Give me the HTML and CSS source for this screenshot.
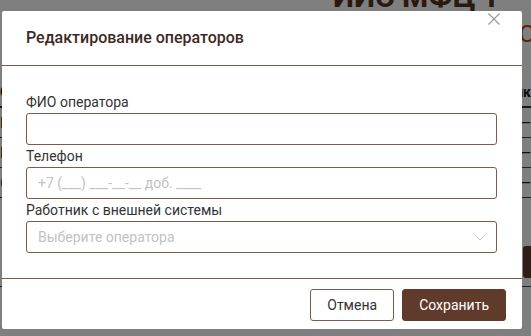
FILE: index.html
```html
<!DOCTYPE html>
<html lang="ru">
<head>
    <meta charset="UTF-8">
    <meta name="viewport" content="width=device-width, initial-scale=1.0">
    <title>Редактирование операторов</title>
    <link rel="stylesheet" href="styles.css">
</head>
<body>
    <div class="page">
        <div class="page-header">
            <h1>ИИС МФЦ Т</h1>
            <div class="page-sub">С</div>
        </div>
        <div class="page-table">
            <div class="row head"><span>Оператор</span><span>Ник</span></div>
            <div class="row"><span>Иванов</span><span>—</span></div>
            <div class="row"><span>Петров</span><span>—</span></div>
            <div class="row"><span class="link">Сидоров</span><span>—</span></div>
        </div>
        <div class="page-actions">
            <button class="page-btn"></button>
        </div>
    </div>

    <div class="overlay">
        <div class="modal">
            <div class="modal-header">
                <h2>Редактирование операторов</h2>
                <button class="close" aria-label="Закрыть">
                    <svg width="12" height="12" viewBox="0 0 12 12">
                        <path d="M0.5 0.5 L11.5 11.5 M11.5 0.5 L0.5 11.5" stroke="#9a9a9a" stroke-width="1.2" fill="none"/>
                    </svg>
                </button>
            </div>

            <div class="modal-body">
                <label class="field-label">ФИО оператора</label>
                <input class="field" type="text">

                <label class="field-label">Телефон</label>
                <input class="field" type="text" placeholder="+7 (___) ___-__-__ доб. ____">

                <label class="field-label">Работник с внешней системы</label>
                <div class="field select">
                    <span class="placeholder">Выберите оператора</span>
                    <svg width="12" height="7" viewBox="0 0 12 7">
                        <path d="M0.5 0.5 L6 6 L11.5 0.5" stroke="#c4c4c4" stroke-width="1" fill="none"/>
                    </svg>
                </div>
            </div>

            <div class="modal-footer">
                <button class="btn btn-cancel">Отмена</button>
                <button class="btn btn-save">Сохранить</button>
            </div>
        </div>
    </div>
</body>
</html>
```

FILE: styles.css
```css
* {
    margin: 0;
    padding: 0;
    box-sizing: border-box;
    font-family: Roboto, 'Liberation Sans', sans-serif;
}

body {
    background-color: #fff;
    height: 100vh;
    overflow: hidden;
}

/* page behind the dialog */
.page-header {
    display: flex;
    flex-direction: column;
    align-items: flex-start;
    padding-left: 333px;
    margin-top: -16px;
}

.page-header h1 {
    font-size: 30px;
    font-weight: 700;
    color: #55321f;
    white-space: nowrap;
    line-height: 26px;
}

.page-sub {
    margin-top: 10px;
    padding-left: 186px;
    font-size: 24px;
    color: #b4402c;
    white-space: nowrap;
}

.page-table {
    margin-top: 30px;
}

.row {
    display: flex;
    justify-content: space-between;
    height: 30px;
    align-items: center;
    border-bottom: 1px solid #444;
    font-size: 14px;
    color: #222;
}

.row.head {
    font-weight: 700;
    border-bottom: 2px solid #333;
}

.link {
    color: #1f5fa8;
}

.page-actions {
    display: flex;
    justify-content: flex-end;
    margin-top: 48px;
    padding-bottom: 8px;
    border-bottom: 1px solid #444;
}

.page-btn {
    width: 8px;
    height: 32px;
    border: none;
    border-radius: 3px 0 0 3px;
    background-color: #603a2b;
}

/* dialog */
.overlay {
    position: fixed;
    inset: 0;
    background-color: rgba(0, 0, 0, 0.5);
    padding: 11px 0 0 2px;
}

.modal {
    position: relative;
    width: 520px;
    background-color: #fff;
    border-radius: 2px;
}

.modal-header {
    height: 55px;
    padding: 0 24px;
    display: flex;
    align-items: center;
    border-bottom: 1px solid #7d5a4a;
}

.modal-header h2 {
    font-size: 16px;
    font-weight: 500;
    color: #3d2a1e;
    margin-top: -1px;
}

.close {
    position: absolute;
    top: 2px;
    right: 22px;
    width: 12px;
    height: 12px;
    border: none;
    background: none;
    display: flex;
    cursor: pointer;
}

.modal-body {
    padding: 26px 25px 25px 24px;
    display: flex;
    flex-direction: column;
}

.field-label {
    font-size: 14px;
    line-height: 20px;
    color: #333;
    margin-bottom: 1px;
}

.field {
    height: 32px;
    width: 100%;
    border: 1px solid #7d5a4a;
    border-radius: 3px;
    padding: 0 11px;
    font-size: 14px;
    color: #333;
    outline: none;
    margin-bottom: 1px;
}

.field::placeholder {
    color: #c2c2c2;
}

.select {
    display: flex;
    align-items: center;
    justify-content: space-between;
    margin-bottom: 0;
}

.select svg {
    margin-right: -1px;
}

.placeholder {
    color: #c2c2c2;
}

.modal-footer {
    border-top: 1px solid #7d5a4a;
    padding: 10px 16px 8px;
    display: flex;
    justify-content: flex-end;
    gap: 8px;
}

.btn {
    height: 32px;
    padding: 0 16px;
    border-radius: 3px;
    font-size: 14px;
    cursor: pointer;
}

.btn-cancel {
    background-color: #fff;
    border: 1px solid #7d5a4a;
    color: #333;
}

.btn-save {
    background-color: #603b2b;
    border: 1px solid #603b2b;
    color: #fff;
}
```
